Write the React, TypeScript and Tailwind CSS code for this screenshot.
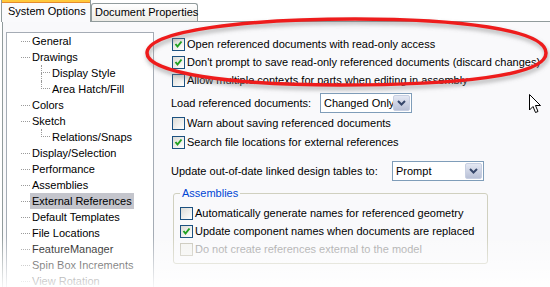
import clsx from "clsx"

type Node = { label: string; level: 1 | 2; last?: boolean; selected?: boolean }

const tree: Node[] = [
    { label: "General", level: 1 },
    { label: "Drawings", level: 1 },
    { label: "Display Style", level: 2 },
    { label: "Area Hatch/Fill", level: 2, last: true },
    { label: "Colors", level: 1 },
    { label: "Sketch", level: 1 },
    { label: "Relations/Snaps", level: 2, last: true },
    { label: "Display/Selection", level: 1 },
    { label: "Performance", level: 1 },
    { label: "Assemblies", level: 1 },
    { label: "External References", level: 1, selected: true },
    { label: "Default Templates", level: 1 },
    { label: "File Locations", level: 1 },
    { label: "FeatureManager", level: 1 },
    { label: "Spin Box Increments", level: 1 },
    { label: "View Rotation", level: 1 },
]

function TreeRow({ node }: { node: Node }) {
    return (
        <div className="flex h-4 items-center">
            {node.level === 1 ? (
                <span className="ml-[14px] w-[9px] border-t border-dotted border-[#9a9a9a]" />
            ) : (
                <span className="ml-[34px] flex h-full w-[9px] flex-col">
                    <span className="h-1/2 border-b border-l border-dotted border-[#9a9a9a]" />
                    <span className={clsx("flex-1", !node.last && "border-l border-dotted border-[#9a9a9a]")} />
                </span>
            )}
            <span className={clsx("flex h-full items-center px-[2px] whitespace-nowrap", node.selected && "bg-[#c4c5cc]")}>
                {node.label}
            </span>
        </div>
    )
}

function CheckBox({ checked, disabled }: { checked?: boolean; disabled?: boolean }) {
    return (
        <span
            className={clsx(
                "flex size-[13px] shrink-0 items-center justify-center border",
                disabled ? "border-[#c9c7ba] bg-[#f4f4f2]" : "border-[#1c5180] bg-linear-to-br from-[#dcdcd7] to-white"
            )}
        >
            {checked && (
                <svg width="11" height="11" viewBox="0 0 11 11">
                    <path d="M2.5 5 L4.5 7.5 L8.5 2.5" fill="none" stroke="#21a121" strokeWidth="2" />
                </svg>
            )}
        </span>
    )
}

function Option({ label, checked, disabled }: { label: string; checked?: boolean; disabled?: boolean }) {
    return (
        <div className={clsx("flex h-[18px] items-center gap-[2px] whitespace-nowrap", disabled && "text-[#a3a3a3]")}>
            <CheckBox checked={checked} disabled={disabled} />
            <span>{label}</span>
        </div>
    )
}

function Select({ value, className }: { value: string; className: string }) {
    return (
        <div className={clsx("flex h-5 items-stretch border border-[#7f9db9] bg-white p-px", className)}>
            <span className="flex min-w-0 flex-1 items-center overflow-hidden pl-[2px] whitespace-nowrap">{value}</span>
            <span className="flex w-[17px] shrink-0 items-center justify-center rounded-[2px] border border-[#c7cfe2] bg-linear-to-b from-[#e4e8f3] to-[#b8c0d6]">
                <svg width="9" height="6" viewBox="0 0 9 6">
                    <path d="M1 1 L4.5 4.5 L8 1" fill="none" stroke="#36476b" strokeWidth="2" />
                </svg>
            </span>
        </div>
    )
}

export default function App() {
    return (
        <div className="relative h-[287px] w-[550px] overflow-hidden bg-white font-['Liberation_Sans',Arial,sans-serif] text-[11px] text-black">
            {/* tabs */}
            <div className="relative z-10 flex h-[21px] items-end pl-px">
                <div className="-mb-px flex h-[22px] w-[90px] flex-col border-x border-[#919b9c] bg-[#fafafc]">
                    <span className="h-[3px] border-b border-[#e68b2c] bg-[#ffc83c]" />
                    <span className="flex flex-1 items-center pb-[3px] pl-[6px] whitespace-nowrap">System Options</span>
                </div>
                <div className="flex h-[18px] w-[107px] items-center rounded-t-[3px] border border-b-0 border-[#919b9c] bg-linear-to-b from-white to-[#ecebe6] pl-[3px] whitespace-nowrap">
                    Document Properties
                </div>
            </div>

            {/* panel */}
            <div className="ml-[2px] flex h-[266px] border-t border-l border-[#919b9c] bg-[#f9f9fb]">
                <div className="mt-[10px] ml-[3px] h-[270px] w-[148px] shrink-0 border border-[#a5acb5] bg-white">
                    {tree.map((n) => (
                        <TreeRow key={n.label} node={n} />
                    ))}
                </div>

                <div className="flex flex-col pt-[13px] pl-[17px]">
                    <div className="ml-px">
                        <Option label="Open referenced documents with read-only access" checked />
                        <Option label="Don't prompt to save read-only referenced documents (discard changes)" checked />
                        <Option label="Allow multiple contexts for parts when editing in assembly" />
                    </div>

                    <div className="mt-[4px] flex items-center whitespace-nowrap">
                        <span className="w-[149px]">Load referenced documents:</span>
                        <Select value="Changed Only" className="w-[92px]" />
                    </div>

                    <div className="mt-px ml-px">
                        <Option label="Warn about saving referenced documents" />
                        <div className="mt-px">
                            <Option label="Search file locations for external references" checked />
                        </div>
                    </div>

                    <div className="mt-[10px] flex items-center whitespace-nowrap">
                        <span className="w-[221px]">Update out-of-date linked design tables to:</span>
                        <Select value="Prompt" className="w-[92px]" />
                    </div>

                    <fieldset className="mt-[5px] ml-[2px] w-[315px] rounded-[3px] border border-[#d0d0bf] px-[6px] pt-[4px] pb-[5px]">
                        <legend className="px-[2px] leading-[14px] text-[#0046d5]">Assemblies</legend>
                        <Option label="Automatically generate names for referenced geometry" />
                        <Option label="Update component names when documents are replaced" checked />
                        <Option label="Do not create references external to the model" disabled />
                    </fieldset>
                </div>
            </div>

            {/* red marker ellipse */}
            <svg className="pointer-events-none absolute inset-0" width="550" height="287" viewBox="0 0 550 287">
                <defs>
                    <filter id="blur" x="-10%" y="-30%" width="120%" height="160%">
                        <feGaussianBlur stdDeviation="2" />
                    </filter>
                </defs>
                <path
                    d="M147 53 C147 30 250 19 355 19 C455 19 546 29 546 53 C546 76 455 85 340 85 C230 85 147 73 147 53 Z"
                    fill="none"
                    stroke="#7a7a7a"
                    strokeOpacity="0.55"
                    strokeWidth="4"
                    transform="translate(1 3)"
                    filter="url(#blur)"
                />
                <path
                    d="M147 53 C147 30 250 19 355 19 C455 19 546 29 546 53 C546 76 455 85 340 85 C230 85 147 73 147 53 Z"
                    fill="none"
                    stroke="#ee1c1c"
                    strokeWidth="3.5"
                />
            </svg>

            {/* mouse pointer */}
            <svg className="pointer-events-none absolute top-[94px] left-[529px]" width="13" height="20" viewBox="0 0 13 20">
                <path d="M0.5 0.5 L0.5 16 L4 12.5 L6.5 18.5 L9 17.5 L6.5 11.5 L11.5 11.5 Z" fill="white" stroke="black" strokeWidth="1" />
            </svg>

            {/* fade out */}
            <div className="pointer-events-none absolute inset-x-0 top-[236px] h-[51px] bg-linear-to-b from-white/0 to-white/90" />
        </div>
    )
}
